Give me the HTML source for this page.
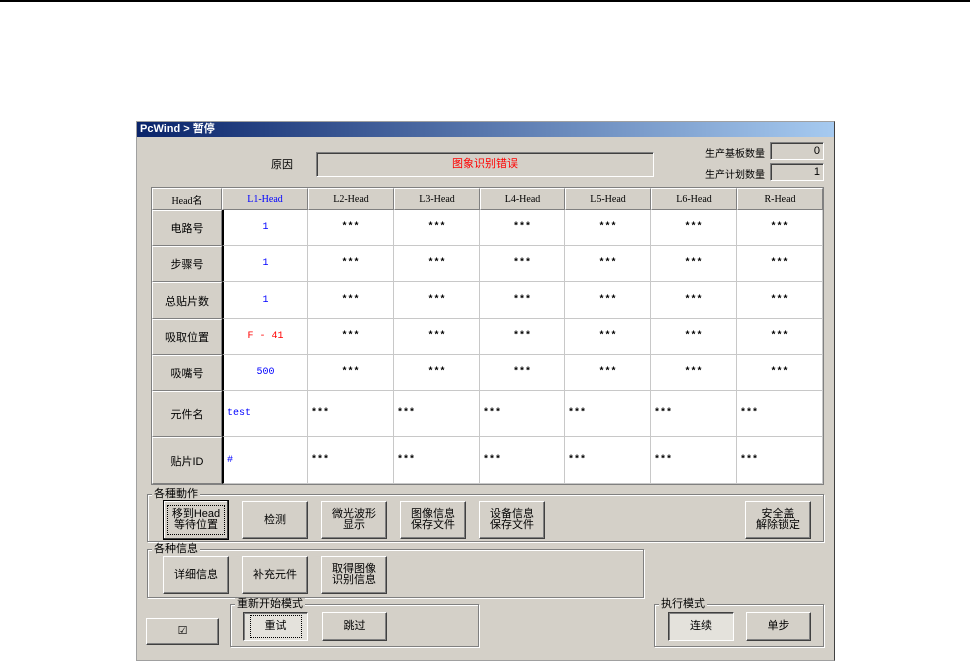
<!DOCTYPE html><html><head><meta charset="utf-8"><style>
*{margin:0;padding:0;box-sizing:border-box}
body{width:970px;height:654px;background:#fff;position:relative;overflow:hidden;font-family:"Liberation Sans","WenQuanYi Zen Hei","Noto Sans CJK SC",sans-serif;font-size:11px;color:#000}
.a{position:absolute}
.win{left:136px;top:121px;width:699px;height:540px;background:#d4d0c8;border:1px solid #a0a0a0;border-right-color:#404040}
.title{left:137px;top:122px;width:697px;height:15px;background:linear-gradient(90deg,#0a246a,#a6caf0);color:#fff;font-weight:bold;font-size:11px;line-height:15px;padding-left:3px}
.sunk{background:#d4d0c8;border:1px solid;border-color:#808080 #fff #fff #808080;box-shadow:inset 1px 1px 0 #404040}
.fr{border:1px solid #808080;box-shadow:1px 1px 0 #fff,inset 1px 1px 0 #fff}
.lg{background:#d4d0c8;padding:0 2px;line-height:12px;font-size:11px}
.btn{background:#d4d0c8;border:1px solid;border-color:#fff #404040 #404040 #fff;box-shadow:inset -1px -1px 0 #808080;display:flex;align-items:center;justify-content:center;text-align:center;font-size:11px;line-height:11px}
.c{display:flex;align-items:center;justify-content:center;font-size:10px;font-family:"Liberation Mono","WenQuanYi Zen Hei",monospace}
.h{background:#d4d0c8;border:1px solid;border-color:#fff #808080 #808080 #fff;font-family:"Liberation Serif","WenQuanYi Zen Hei",serif}
.d{background:#fff;border-right:1px solid #c8c8c8;border-bottom:1px solid #c8c8c8}
.l{justify-content:flex-start;padding-left:3px}
.st{font-weight:bold}
</style></head><body>
<div class="a" style="left:0;top:0;width:970px;height:2px;background:#000"></div>
<div class="a win"></div>
<div class="a title">PcWind &gt; 暂停</div>
<div class="a" style="left:271px;top:156px;font-size:11px">原因</div>
<div class="a sunk" style="left:316px;top:152px;width:338px;height:25px;color:#f00;text-align:center;line-height:23px">图象识别错误</div>
<div class="a" style="left:703px;top:145px;font-size:10px;width:62px;text-align:right">生产基板数量</div>
<div class="a sunk" style="left:770px;top:142px;width:54px;height:18px;text-align:right;padding-right:3px;line-height:16px">0</div>
<div class="a" style="left:703px;top:166px;font-size:10px;width:62px;text-align:right">生产计划数量</div>
<div class="a sunk" style="left:770px;top:163px;width:54px;height:18px;text-align:right;padding-right:3px;line-height:16px">1</div>
<div class="a" style="left:151px;top:187px;width:673px;height:298px;border:1px solid #808080;background:#d4d0c8"></div>
<div id="g"></div>
<div class="a fr" style="left:147px;top:494px;width:677px;height:48px"></div>
<div class="a lg" style="left:152px;top:488px">各種動作</div>
<div class="a btn" style="left:163px;top:500px;width:66px;height:40px;border:1px solid #000;box-shadow:inset -1px -1px 0 #404040,inset 1px 1px 0 #fff"><span style="outline:1px dotted #000;padding:3px 4px">移到Head<br>等待位置</span></div>
<div class="a btn" style="left:242px;top:501px;width:66px;height:38px">检测</div>
<div class="a btn" style="left:321px;top:501px;width:66px;height:38px">微光波形<br>显示</div>
<div class="a btn" style="left:400px;top:501px;width:66px;height:38px">图像信息<br>保存文件</div>
<div class="a btn" style="left:479px;top:501px;width:66px;height:38px">设备信息<br>保存文件</div>
<div class="a btn" style="left:745px;top:501px;width:66px;height:38px">安全盖<br>解除锁定</div>
<div class="a fr" style="left:147px;top:549px;width:497px;height:49px"></div>
<div class="a lg" style="left:152px;top:543px">各种信息</div>
<div class="a btn" style="left:163px;top:556px;width:66px;height:38px">详细信息</div>
<div class="a btn" style="left:242px;top:556px;width:66px;height:38px">补充元件</div>
<div class="a btn" style="left:321px;top:556px;width:66px;height:38px">取得图像<br>识别信息</div>
<div class="a btn" style="left:146px;top:618px;width:73px;height:27px">☑</div>
<div class="a fr" style="left:230px;top:604px;width:249px;height:43px"></div>
<div class="a lg" style="left:235px;top:598px">重新开始模式</div>
<div class="a btn" style="left:243px;top:612px;width:65px;height:29px;border-color:#404040 #fff #fff #404040;box-shadow:inset 1px 1px 0 #808080;background:#e4e2dc"><span style="outline:1px dotted #000;padding:5px 14px">重试</span></div>
<div class="a btn" style="left:322px;top:612px;width:65px;height:29px">跳过</div>
<div class="a fr" style="left:654px;top:604px;width:170px;height:43px"></div>
<div class="a lg" style="left:659px;top:598px">执行模式</div>
<div class="a btn" style="left:668px;top:612px;width:66px;height:29px;border-color:#404040 #fff #fff #404040;box-shadow:inset 1px 1px 0 #808080;background:#e4e2dc">连续</div>
<div class="a btn" style="left:746px;top:612px;width:65px;height:29px">单步</div>
<script>
var xs=[152,222,308,394,480,565,651,737,823],ys=[188,210,246,282,319,355,391,437,484];
var hd=["Head名","L1-Head","L2-Head","L3-Head","L4-Head","L5-Head","L6-Head","R-Head"];
var rn=["电路号","步骤号","总贴片数","吸取位置","吸嘴号","元件名","贴片ID"];
var c1=[["1","#00f"],["1","#00f"],["1","#00f"],["F - 41","#f00"],["500","#00f"],["test","#00f"],["#","#00f"]];
var h="";
for(var r=0;r<8;r++)for(var c=0;c<8;c++){
 var s="left:"+xs[c]+"px;top:"+ys[r]+"px;width:"+(xs[c+1]-xs[c])+"px;height:"+(ys[r+1]-ys[r])+"px;";
 var cls="a c",t="";
 if(r==0){cls+=" h";t=hd[c];if(c==1)s+="color:#00f;";}
 else if(c==0){cls+=" h";t=rn[r-1];s+="font-family:'WenQuanYi Zen Hei',sans-serif;font-size:11px;";}
 else{cls+=" d";if(c==1){t=c1[r-1][0];s+="color:"+c1[r-1][1]+";"}else{t="***";cls+=" st";}if(r>=6)cls+=" l";}
 if(c==1&&r>0)s+="border-left:2px solid #000;";
 h+='<div class="'+cls+'" style="'+s+'">'+t+'</div>';}
document.getElementById("g").innerHTML=h;
</script>
</body></html>
